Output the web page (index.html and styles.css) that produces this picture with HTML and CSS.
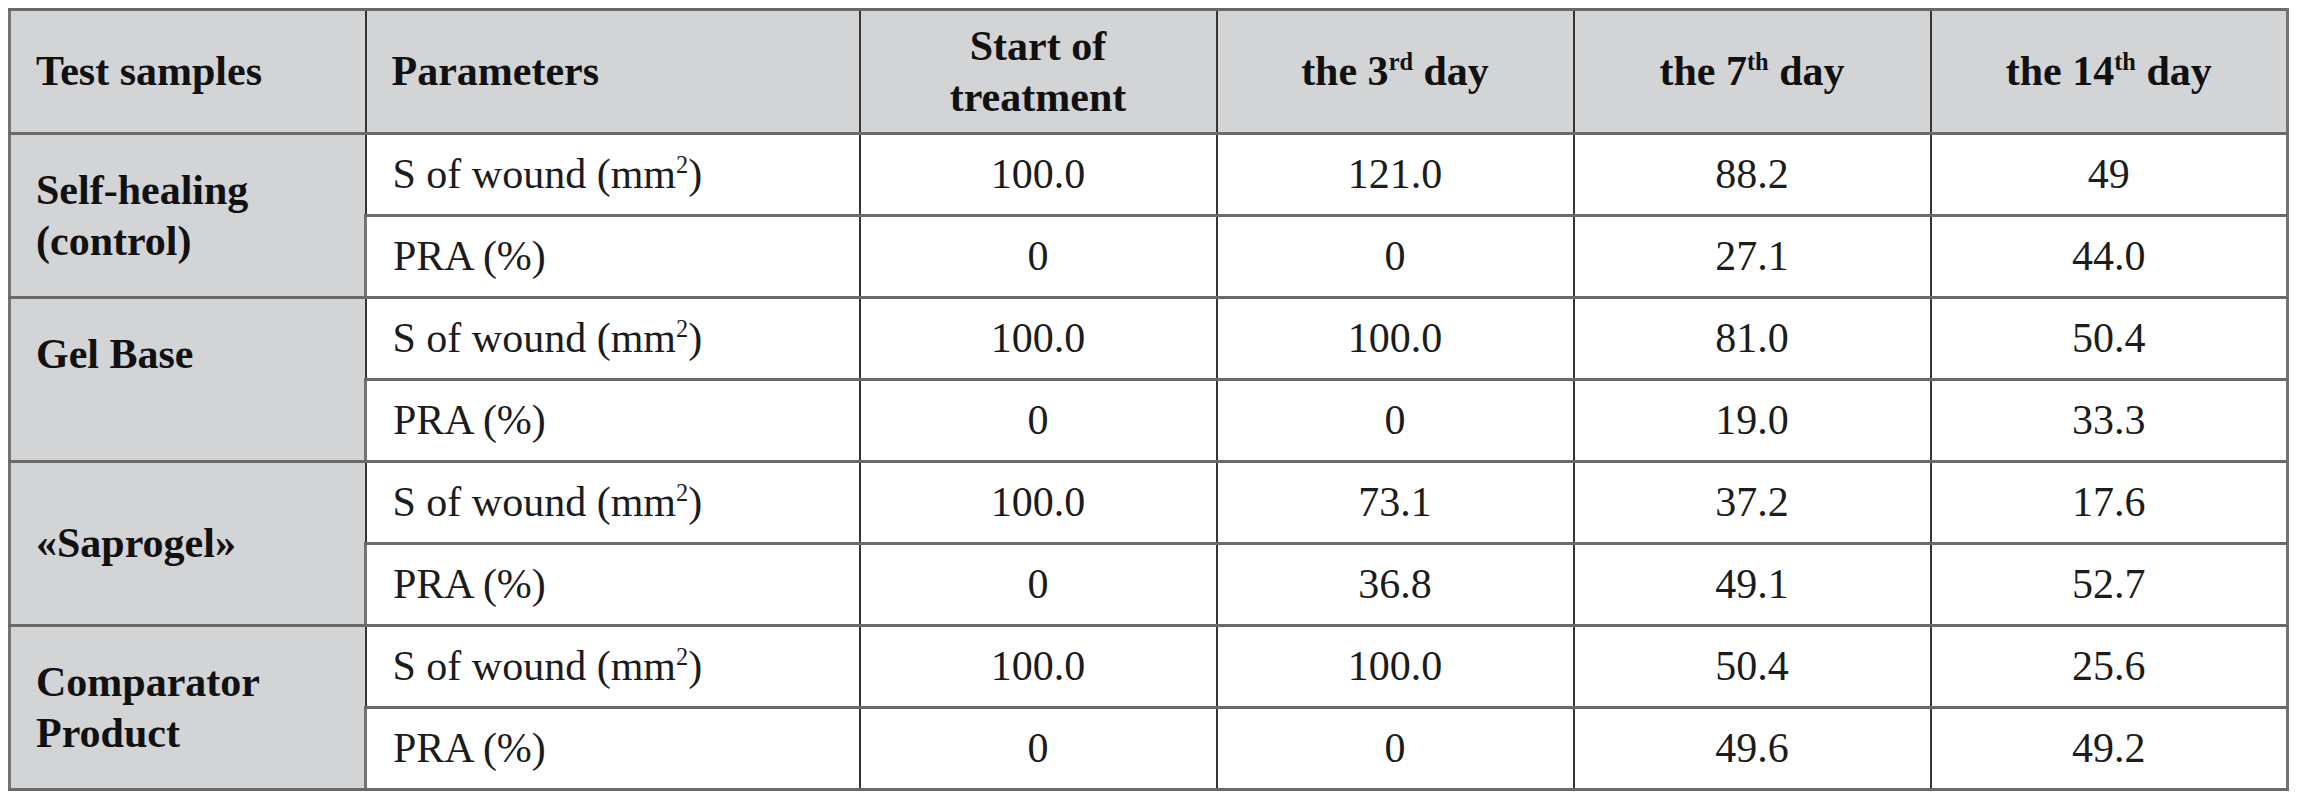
FILE: index.html
```html
<!DOCTYPE html>
<html lang="en">
<head>
<meta charset="utf-8">
<title>Wound healing table</title>
<link rel="stylesheet" href="styles.css">
</head>
<body>
<table class="data">
  <colgroup>
    <col class="c-sample">
    <col class="c-param">
    <col class="c-day">
    <col class="c-day">
    <col class="c-day">
    <col class="c-day">
  </colgroup>
  <thead>
    <tr>
      <th class="left">Test samples</th>
      <th class="left">Parameters</th>
      <th>Start of<br>treatment</th>
      <th>the 3<sup>rd</sup> day</th>
      <th>the 7<sup>th</sup> day</th>
      <th>the 14<sup>th</sup> day</th>
    </tr>
  </thead>
  <tbody>
    <tr>
      <th class="sample" rowspan="2">Self-healing<br>(control)</th>
      <td class="param">S of wound (mm<sup>2</sup>)</td>
      <td>100.0</td><td>121.0</td><td>88.2</td><td>49</td>
    </tr>
    <tr>
      <td class="param">PRA (%)</td>
      <td>0</td><td>0</td><td>27.1</td><td>44.0</td>
    </tr>
    <tr>
      <th class="sample raised" rowspan="2">Gel Base</th>
      <td class="param">S of wound (mm<sup>2</sup>)</td>
      <td>100.0</td><td>100.0</td><td>81.0</td><td>50.4</td>
    </tr>
    <tr>
      <td class="param">PRA (%)</td>
      <td>0</td><td>0</td><td>19.0</td><td>33.3</td>
    </tr>
    <tr>
      <th class="sample" rowspan="2">«Saprogel»</th>
      <td class="param">S of wound (mm<sup>2</sup>)</td>
      <td>100.0</td><td>73.1</td><td>37.2</td><td>17.6</td>
    </tr>
    <tr>
      <td class="param">PRA (%)</td>
      <td>0</td><td>36.8</td><td>49.1</td><td>52.7</td>
    </tr>
    <tr>
      <th class="sample" rowspan="2">Comparator<br>Product</th>
      <td class="param">S of wound (mm<sup>2</sup>)</td>
      <td>100.0</td><td>100.0</td><td>50.4</td><td>25.6</td>
    </tr>
    <tr>
      <td class="param">PRA (%)</td>
      <td>0</td><td>0</td><td>49.6</td><td>49.2</td>
    </tr>
  </tbody>
</table>
</body>
</html>
```
FILE: styles.css
```css
html, body {
  background: #ffffff;
}

body {
  margin: 8px;
  font-family: "Liberation Serif", "Times New Roman", serif;
  color: #1c1c1c;
}

.data {
  border-collapse: collapse;
  table-layout: fixed;
  width: 2279px;
  font-size: 42px;
  line-height: 51px;
}

.c-sample { width: 356px; }
.c-param { width: 494px; }
.c-day { width: 357px; }

.data th,
.data td {
  border-left: 2px solid #353535;
  border-right: 2px solid #353535;
  border-top: 3px solid #6a6a6a;
  border-bottom: 3px solid #6a6a6a;
  padding: 0;
  text-align: center;
  vertical-align: middle;
}

.data tr > :first-child {
  border-left: 3px solid #737373;
}

.data tr > :last-child {
  border-right: 3px solid #737373;
}

.data thead th {
  background: #d3d4d6;
  font-weight: bold;
  color: #111111;
  height: 121px;
}

.data th.left {
  text-align: left;
  padding-left: 25px;
}

.data th.sample {
  background: #d3d4d6;
  font-weight: bold;
  color: #111111;
  text-align: left;
  padding-left: 25px;
  border-left: 3px solid #737373;
}

.data th.raised {
  padding-bottom: 51px;
}

.data td {
  height: 79px;
  background: #ffffff;
}

.data td.param {
  text-align: left;
  padding-left: 26px;
}

.data sup {
  font-size: 0.58em;
  line-height: 0;
  vertical-align: 0.62em;
}
```
